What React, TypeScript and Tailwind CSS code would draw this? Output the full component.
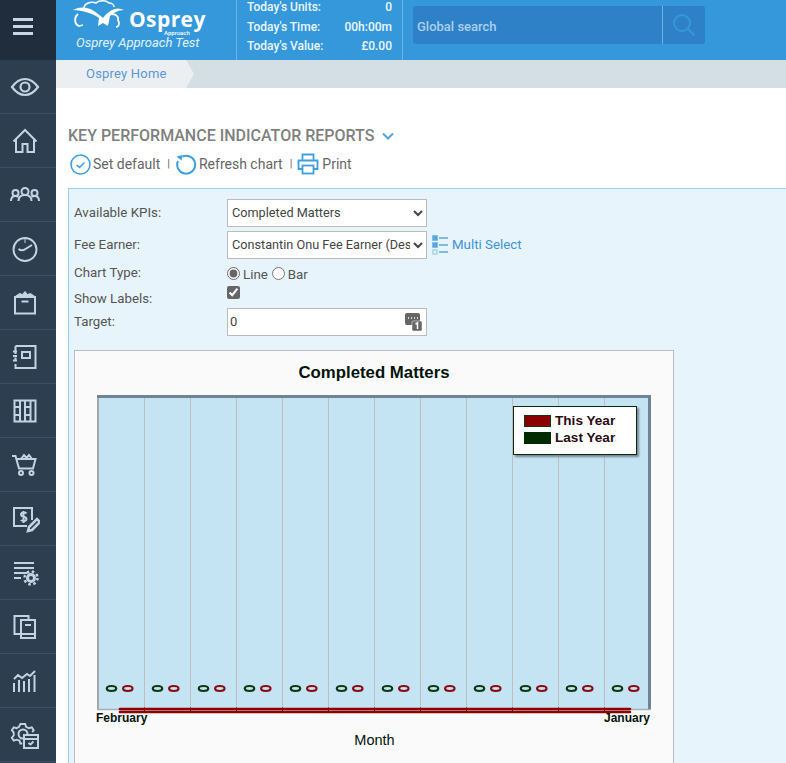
import React from "react";

const S = { fill: "none", stroke: "#c4d3e1", strokeWidth: 2 } as const;

function Ico({ children }: { children: React.ReactNode }) {
  return (
    <svg width="30" height="30" viewBox="0 0 30 30" {...S}>
      {children}
    </svg>
  );
}

const sideIcons: React.ReactNode[] = [
  <Ico key="eye">
    <path d="M2 15C6 9.5 10 7 15 7s9 2.5 13 8c-4 5.500-8 8-13 8S6 20.500 2 15Z" strokeWidth="2.2" />
    <circle cx="15" cy="15" r="4.500" strokeWidth="2.2" />
  </Ico>,
  <Ico key="home">
    <path d="M3.500 15.500 15 4l11.500 11.500" />
    <path d="M6 13v13h6.500v-8h5v8H24V13" />
  </Ico>,
  <Ico key="people">
    <circle cx="15" cy="11.500" r="3.500" />
    <circle cx="5.500" cy="13" r="3" />
    <circle cx="24.500" cy="13" r="3" />
    <path d="M8.500 21c0-4 2.500-6 6.500-6s6.500 2 6.500 6" />
    <path d="M1 21c0-3 1.500-5 4.500-5 1 0 2 .3 2.700 1" />
    <path d="M29 21c0-3-1.500-5-4.500-5-1 0-2 .3-2.700 1" />
  </Ico>,
  <Ico key="gauge">
    <circle cx="15" cy="15.500" r="11.500" />
    <path d="M8.500 15c2 1.500 5 1.500 7 0l6.500-4" />
    <path d="M15 4v5" strokeWidth="1" />
  </Ico>,
  <Ico key="box">
    <rect x="5" y="9" width="20" height="16.500" />
    <path d="M4.500 9l5-3.500 3 1L15 3.500l2.500 3 3-1 5 3.500Z" fill="#c4d3e1" strokeWidth="1" />
    <path d="M11.500 13.500h7" />
  </Ico>,
  <Ico key="notebook">
    <path d="M5.500 4h20v22h-20v-4M5.500 18.500v-3M5.500 12V4" />
    <path d="M3 9.500h4M3 14h4M3 18.500h4" />
    <rect x="12" y="10" width="8" height="6" />
  </Ico>,
  <Ico key="books">
    <rect x="4.500" y="4.500" width="21" height="21" />
    <path d="M10 4.500v21M15 4.500v21M20.500 4.500v21M4.500 11h5.500M4.500 19h5.500M15 11h5.500M15 19h5.500" />
  </Ico>,
  <Ico key="cart">
    <path d="M2 6h3.500l3.500 12.500h14L25.500 9H7" />
    <path d="M11 9l3-4 2.500 3 2.500-3 3 4" />
    <circle cx="11" cy="23" r="2" />
    <circle cx="21.500" cy="23" r="2" />
  </Ico>,
  <Ico key="invoice">
    <path d="M22 16V4H4v18h13" />
    <path d="M16.500 9.500c-1-1.500-5.500-1.500-5.500 1 0 3 5.500 1.500 5.500 4.500 0 2.500-4.500 2.500-5.500 1M13.500 7v12" />
    <path d="M18 27l1-4 8-8 3 3-8 8Z" strokeWidth="2.500" />
  </Ico>,
  <Ico key="listgear">
    <path d="M4 5h20M4 10h20M4 15h13M4 20h7" />
    <circle cx="21" cy="20" r="3.500" strokeWidth="3" />
    <circle cx="21" cy="20" r="6.500" strokeWidth="2.500" strokeDasharray="2.500 2.600" />
  </Ico>,
  <Ico key="copy">
    <path d="M10 22H4.500V4h14v4" />
    <rect x="11" y="8" width="14" height="18" />
    <path d="M15 13h6M11 22h14" />
  </Ico>,
  <Ico key="chart">
    <path d="M4 13l4-4 4 3 5-4 3 2 5-5" />
    <path d="M4 17v9M9 14v12M14 15v11M19 13v13M24.500 9v17" />
  </Ico>,
  <Ico key="gearcal">
    <path d="M14 20.500H12l-1-3-3-1-3 1-2-3 2-2.500v-3L3 6.500l2-3 3 1 2.500-1.500L12 0h5l1 3 3 1.500 3-1 2 3-1.500 2" transform="translate(-1 4) scale(.95)" />
    <circle cx="13" cy="14" r="4.500" />
    <rect x="14" y="15" width="14" height="13" fill="#2d3e50" />
    <path d="M14 19h14" />
    <path d="M18.500 23l2 1.500 3-3" />
  </Ico>,
];

const gridX = [47.5, 93.5, 139.5, 185.5, 231.5, 277.5, 323.5, 369.5, 415.5, 461.5, 507.5];
const markers = Array.from({ length: 12 }, (_, i) => i);

function Plot() {
  return (
    <svg width="560" height="322" viewBox="0 0 560 322" className="block">
      <rect x="0" y="0" width="554" height="315" fill="#c4e4f4" />
      {gridX.map((x) => (
        <line key={x} x1={x} y1="2" x2={x} y2="314" stroke="#c2bcbc" strokeWidth="1" />
      ))}
      <path d="M1 315V1" stroke="#a0a8ae" strokeWidth="2" fill="none" />
      <path d="M0 1.500H552.500V314.500" stroke="#6f8394" strokeWidth="3" fill="none" />
      <path d="M0 314.500H554" stroke="#a6aeb4" strokeWidth="1.500" fill="none" />
      {markers.map((i) => (
        <g key={i} fill="#c4e4f4" strokeWidth="2.200">
          <ellipse cx={14.5 + i * 46} cy="293.500" rx="4.700" ry="2.500" stroke="#0b3a12" />
          <ellipse cx={30.8 + i * 46} cy="293.500" rx="4.700" ry="2.500" stroke="#8d0a12" />
        </g>
      ))}
      <path d="M23 314H533M23 317H533" stroke="#8b0000" strokeWidth="2.600" strokeLinecap="round" fill="none" />
      {gridX.map((x) => (
        <line key={x} x1={x} y1="312.500" x2={x} y2="318" stroke="#8b0000" strokeWidth="1" />
      ))}
    </svg>
  );
}

export default function App() {
  return (
    <div className="flex h-[763px] w-[786px] overflow-hidden bg-white font-['Roboto',sans-serif]">
      <aside className="flex w-[56px] shrink-0 flex-col bg-[#2d3e50]">
        <div className="flex h-[60px] shrink-0 items-center justify-center bg-[#1f2d3c] pb-[7px] pr-[10px]">
          <svg width="20" height="17" viewBox="0 0 20 17" fill="#c9d5e0">
            <rect x="0" y="0" width="20" height="3" />
            <rect x="0" y="7" width="20" height="3" />
            <rect x="0" y="14" width="20" height="3" />
          </svg>
        </div>
        {sideIcons.map((icon, i) => (
          <div
            key={i}
            className="flex h-[54px] shrink-0 items-center justify-center border-b border-[#3f4f60] pr-[6px]"
          >
            {icon}
          </div>
        ))}
      </aside>

      <main className="flex min-w-0 flex-1 flex-col">
        <header className="flex h-[60px] shrink-0 bg-[#3498db] text-white">
          <div className="relative w-[180px] shrink-0 overflow-hidden">
            <svg width="62" height="36" viewBox="0 0 62 36" className="absolute left-[16px] top-0">
              <path d="M1 10C8 6 16 7 22 11c4 3 7 5 9 7 2-3 5-6 9-8 4-2 8-2 12 0-6 0-10 3-14 6l-2 10-5-3-5 3 1-8C22 14 10 10 1 10Z" fill="#fff" />
              <path d="M12 8c0-4 6-7 12-5 3-3 10-3 13 0 3 0 5 2 5 4" fill="none" stroke="#fff" strokeWidth="1.500" />
              <path d="M6 14c-4 3-4 10 1 12l4-1" fill="none" stroke="#fff" strokeWidth="1.800" />
              <path d="M40 14c5 0 7 4 6 6 2 3 1 7-2 7" fill="none" stroke="#fff" strokeWidth="1.800" />
            </svg>
            <span className="absolute left-[73px] top-[9px] font-['Open_Sans',sans-serif] text-[21px] font-bold leading-[21px] tracking-[0.4px]">
              Osprey
            </span>
            <span className="absolute left-[108px] top-[30px] text-[6px] font-medium leading-[6px]">Approach</span>
            <span className="absolute left-[20px] top-[36px] text-[13px] italic leading-[14px] text-[#e6f2fb]">
              Osprey Approach Test
            </span>
          </div>
          <div className="flex w-[167px] shrink-0 flex-col border-x border-[#6db5e6] pl-[10px] pr-[10px] text-[12px] font-medium leading-[19.500px] text-[#eef6fc]">
            <div className="-mt-[2px] flex justify-between"><span>Today's Units:</span><span>0</span></div>
            <div className="flex justify-between"><span>Today's Time:</span><span>00h:00m</span></div>
            <div className="flex justify-between"><span>Today's Value:</span><span>£0.00</span></div>
          </div>
          <div className="ml-[10px] mt-[6px] flex h-[38px] w-[292px] rounded-[3px] bg-[#2e81c6]">
            <div className="flex w-[250px] items-center border-r border-[#6db5e6] pl-[4px] pt-[3px] text-[13px] font-medium text-[#a9d0ef]">
              Global search
            </div>
            <div className="flex flex-1 items-center justify-center">
              <svg width="24" height="24" viewBox="0 0 24 24" fill="none" stroke="#3498db" strokeWidth="2">
                <circle cx="10" cy="10" r="8" />
                <path d="M16 16l6.500 6.500" />
              </svg>
            </div>
          </div>
        </header>

        <nav className="flex h-[28px] shrink-0 bg-[#d3dfe4]">
          <div className="flex w-[138px] items-center bg-[#eceff1] pl-[30px] text-[13px] tracking-[0.2px] text-[#5a97d6] [clip-path:polygon(0_0,130px_0,138px_50%,130px_100%,0_100%)]">
            Osprey Home
          </div>
        </nav>

        <section className="flex min-h-0 flex-1 flex-col pl-[12px] pt-[38px]">
          <h1 className="flex h-[20px] shrink-0 items-center gap-[8px] text-[16px] font-medium text-[#808080]">
            KEY PERFORMANCE INDICATOR REPORTS
            <svg width="12" height="8" viewBox="0 0 12 8" fill="none" stroke="#4ea6e0" strokeWidth="2">
              <path d="M1 1.500l5 5 5-5" />
            </svg>
          </h1>

          <div className="mt-[7px] flex h-[22px] shrink-0 items-center pl-[2px] text-[14px] text-[#666]">
            <svg width="21" height="21" viewBox="0 0 21 21" fill="none" stroke="#3d9fe0" strokeWidth="1.600">
              <circle cx="10.500" cy="10.500" r="9.500" />
              <path d="M6.500 11l3 2.500 5-5" />
            </svg>
            <span className="ml-[2px]">Set default</span>
            <span className="ml-[7px] text-[11px]">|</span>
            <svg width="22" height="22" viewBox="0 0 22 22" fill="none" stroke="#3d9fe0" strokeWidth="2" className="ml-[5px]">
              <path d="M7.500 3.500A9 9 0 1 1 3 8" />
              <path d="M1.500 3.500l6-1.500-1 5.500Z" fill="#3d9fe0" stroke="none" />
            </svg>
            <span className="ml-[2px]">Refresh chart</span>
            <span className="ml-[7px] text-[11px]">|</span>
            <svg width="22" height="22" viewBox="0 0 22 22" fill="none" stroke="#3d9fe0" strokeWidth="1.800" className="ml-[5px]">
              <path d="M5.500 7V1.500h11V7" />
              <path d="M5 16H1.500V7.500h19V16H17" />
              <rect x="5.500" y="12.500" width="11" height="8" />
            </svg>
            <span className="ml-[3px]">Print</span>
          </div>

          <div className="mt-[13px] flex-1 border-l border-t border-[#9fd0f0] bg-[#e8f4fb] pl-[5px] pt-[10px] text-[13.300px] text-[#555]">
            <div className="flex h-[28px] items-center">
              <label className="w-[153px]">Available KPIs:</label>
              <select className="h-[28px] w-[200px] border border-[#bbb] bg-white pb-[1px] text-[12.700px] text-[#444]">
                <option>Completed Matters</option>
              </select>
            </div>
            <div className="mt-[4px] flex h-[28px] items-center">
              <label className="w-[153px]">Fee Earner:</label>
              <select className="h-[28px] w-[200px] border border-[#bbb] bg-white pb-[1px] text-[12.700px] text-[#444]">
                <option>Constantin Onu Fee Earner (Despatch)</option>
              </select>
              <svg width="17" height="22" viewBox="0 0 17 22" className="ml-[5px]" fill="none" stroke="#5ba6e0" strokeWidth="1.500">
                <rect x="1" y="2" width="4" height="4" fill="#5ba6e0" />
                <rect x="1" y="9" width="4" height="4" fill="#5ba6e0" />
                <rect x="1" y="16" width="4" height="4" stroke="#a9d2f0" />
                <path d="M7 4h9M7 11h9M7 18h9" />
              </svg>
              <span className="ml-[3px] text-[#3d92d8]">Multi Select</span>
            </div>
            <div className="mt-[3px] flex h-[22px] items-center">
              <label className="w-[153px]">Chart Type:</label>
              <input type="radio" name="ct" defaultChecked className="m-0 h-[13px] w-[13px] accent-[#666]" />
              <span className="ml-[3px] mt-[3px]">Line</span>
              <input type="radio" name="ct" className="m-0 ml-[4px] h-[13px] w-[13px] accent-[#666]" />
              <span className="ml-[3px] mt-[3px]">Bar</span>
            </div>
            <div className="flex h-[24px] items-center">
              <label className="mt-[5px] w-[153px]">Show Labels:</label>
              <input type="checkbox" defaultChecked className="m-0 mb-[7px] h-[13px] w-[13px] accent-[#666]" />
            </div>
            <div className="flex h-[28px] items-center">
              <label className="w-[153px]">Target:</label>
              <div className="flex h-[28px] w-[200px] items-center justify-between border border-[#bbb] bg-white pl-[2px] pr-[4px] text-[13px] text-[#444]">
                <span>0</span>
                <svg width="17" height="18" viewBox="0 0 17 18">
                  <rect x="0" y="0" width="15" height="12" rx="2" fill="#666" />
                  <path d="M3 5h1M6 5h1M9 5h1M12 5h1" stroke="#fff" strokeWidth="1.500" />
                  <rect x="7" y="8" width="10" height="10" rx="1.500" fill="#666" stroke="#fff" strokeWidth=".5" />
                  <path d="M10.500 11l2-1v6" stroke="#fff" strokeWidth="1.500" fill="none" />
                </svg>
              </div>
            </div>

            <div className="relative mt-[14px] h-[500px] w-[600px] border border-[#b9bdc1] bg-[#fafafa] font-['Liberation_Sans',Arial,sans-serif] text-[#02140a]">
              <div className="h-[44px] pt-[12px] text-center text-[16.800px] font-bold leading-[20px]">Completed Matters</div>
              <div className="ml-[22px]">
                <Plot />
              </div>
              <div className="-mt-[6px] ml-[21px] flex w-[554px] justify-between text-[12px] font-bold leading-[14px]">
                <span>February</span>
                <span>January</span>
              </div>
              <div className="mt-[7px] pl-[1px] text-center text-[14.500px] leading-[16px]">Month</div>
              <div className="absolute left-[438px] top-[55px] flex h-[49px] w-[124px] flex-col gap-[3px] border border-[#0a2a12] bg-white pl-[10px] pt-[7px] text-[13.600px] font-bold leading-[14px] text-[#2a0a14] shadow-[2px_2px_2px_#77858f]">
                <div className="flex items-center gap-[4px]">
                  <span className="h-[12px] w-[27px] border border-[#0b3a12] bg-[#8b0000]" />
                  This Year
                </div>
                <div className="flex items-center gap-[4px]">
                  <span className="h-[12px] w-[27px] bg-[#002a00]" />
                  Last Year
                </div>
              </div>
            </div>
          </div>
        </section>
      </main>
    </div>
  );
}
